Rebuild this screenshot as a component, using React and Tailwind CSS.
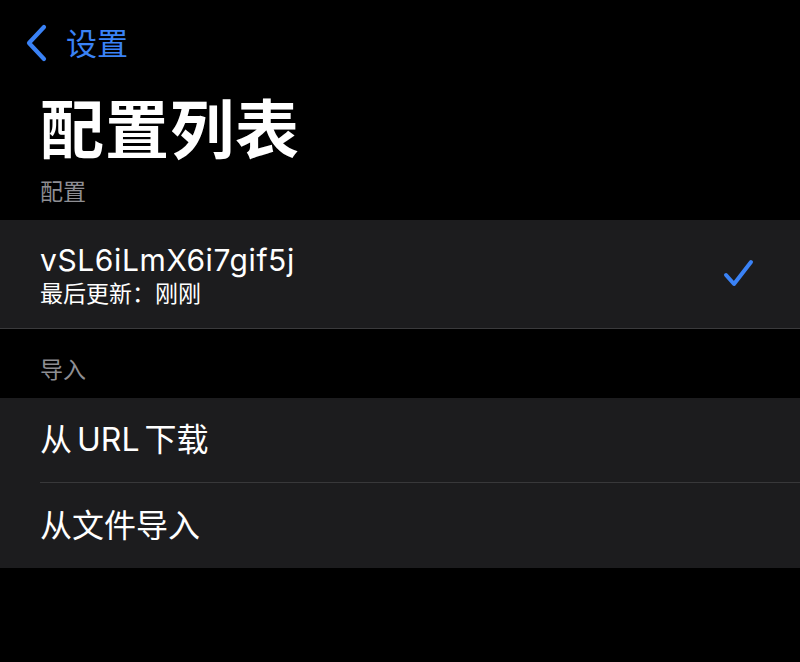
export default function App() {
  const font = { fontFamily: 'Inter, "Noto Sans CJK SC", sans-serif' };
  return (
    <div className="w-[800px] h-[662px] bg-black text-white overflow-hidden" style={font}>
      {/* navigation bar */}
      <div className="h-[86px] flex items-center pl-[24px]">
        <button className="flex items-center gap-[18px] text-[#3a82f6]">
          <svg width="24" height="38" viewBox="0 0 24 38" fill="none">
            <path d="M20 3 L5 19 L20 35" stroke="currentColor" strokeWidth="4.2" strokeLinecap="round" strokeLinejoin="round" />
          </svg>
          <span className="text-[31px] leading-none">设置</span>
        </button>
      </div>

      {/* large title */}
      <h1 className="px-[40px] text-[64px] font-bold leading-none mt-[12px] tracking-[1px]">配置列表</h1>

      {/* profile section */}
      <div className="px-[40px] mt-[19px] text-[23px] leading-none text-[#8e8e93] h-[39px]">配置</div>
      <div className="bg-[#1c1c1e] border-b border-[#3a3a3c] h-[109px] flex items-center pl-[40px] pr-[44px]">
        <div className="flex-1 pt-[2px]">
          <div className="text-[30px] leading-[38px] tracking-[0.6px]">vSL6iLmX6i7gif5j</div>
          <div className="text-[23px] leading-[30px]">最后更新：刚刚</div>
        </div>
        <svg width="34" height="32" viewBox="0 0 34 32" fill="none" className="text-[#3a82f6]">
          <path d="M4 17 L12 26 L29 4" stroke="currentColor" strokeWidth="4" strokeLinecap="round" strokeLinejoin="round" />
        </svg>
      </div>

      {/* import section */}
      <div className="px-[40px] pt-[30px] text-[23px] leading-none text-[#8e8e93] h-[69px]">导入</div>
      <div className="bg-[#1c1c1e]">
        <div className="h-[85px] ml-[40px] flex items-center border-b border-[#38383a] text-[32px]">
          <span className="mr-[5px]">从</span>
          <span className="mr-[5px]">URL</span>
          <span>下载</span>
        </div>
        <div className="h-[85px] ml-[40px] flex items-center text-[32px]">从文件导入</div>
      </div>
    </div>
  );
}
